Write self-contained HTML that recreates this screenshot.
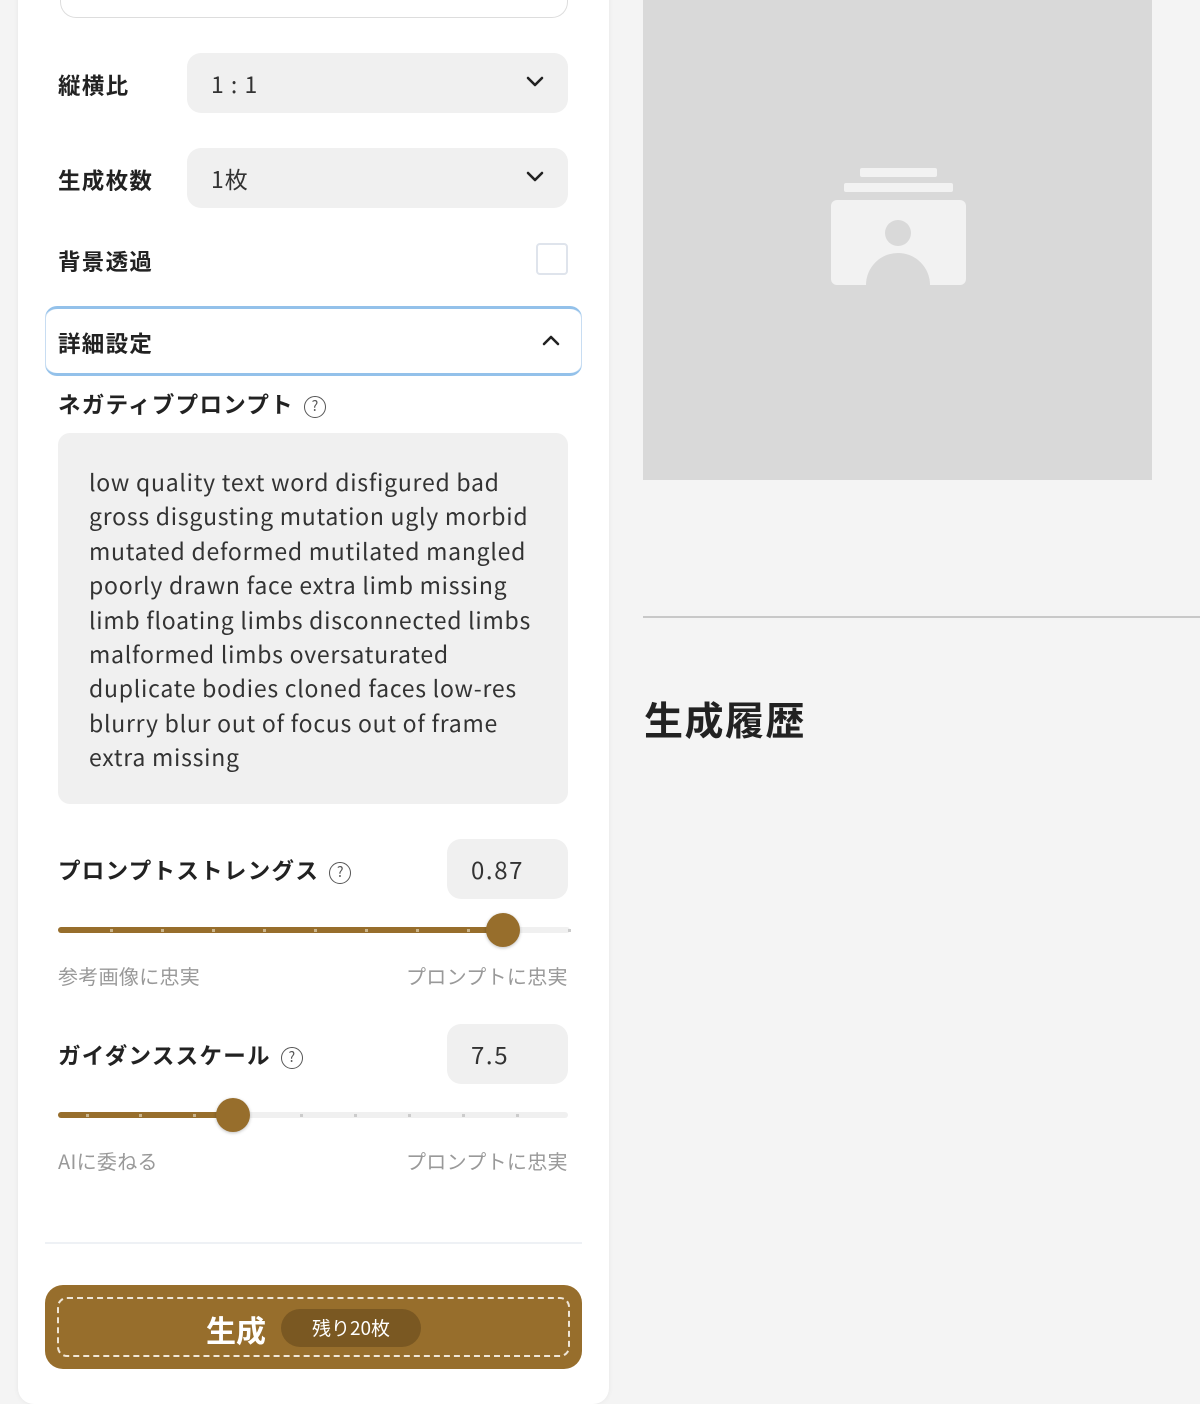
<!DOCTYPE html>
<html><head><meta charset="utf-8">
<style>
*{margin:0;padding:0;box-sizing:border-box}
body{width:1200px;height:1404px;background:#f4f4f4;position:relative;overflow:hidden;font-family:"Noto Sans CJK JP","Liberation Sans",sans-serif;color:#222}
.a{position:absolute}
.card{left:18px;top:-20px;width:591px;height:1424px;background:#fff;border-radius:16px;box-shadow:0 0 6px rgba(0,0,0,.06)}
.lbl{font-size:22.5px;font-weight:700;color:#222;line-height:1;letter-spacing:1.3px}
.sel{background:#f0f0f0;border-radius:14px;left:187px;width:381px;height:60px;font-size:23px;padding-left:24px;line-height:60px;color:#333;letter-spacing:1px}
.chev{position:absolute;right:24px;top:22px}
.q{display:inline-block;width:22px;height:22px;border:1.5px solid #555;border-radius:50%;font-size:14px;line-height:19px;text-align:center;font-weight:400;color:#555;vertical-align:2px;margin-left:10px;letter-spacing:0}
.val{left:447px;width:121px;height:60px;background:#f0f0f0;border-radius:14px;font-size:24px;line-height:60px;padding-left:24px;color:#333;letter-spacing:1.6px}
.track{height:6px;border-radius:3px;background:#f0f0f0}
.fill{height:6px;border-radius:3px;background:#976e2c;position:absolute;left:0;top:0}
.tick{position:absolute;top:2px;width:3px;height:3px;background:#c9b48c}
.tk2{background:#ccc}
.thumb{width:34px;height:34px;border-radius:50%;background:#976e2c;box-shadow:0 1px 3px rgba(0,0,0,.25)}
.sub{font-size:20px;color:#999;line-height:1;letter-spacing:0.3px}
</style></head><body>
<div class="a card"></div>
<div class="a" style="left:60px;top:-30px;width:508px;height:48px;border:1px solid #ddd;border-top:none;border-radius:0 0 16px 16px"></div>

<div class="a lbl" style="left:58px;top:74px">縦横比</div>
<div class="a sel" style="top:53px">1 : 1<svg class="chev" width="18" height="14" viewBox="0 0 18 14"><path d="M2 3l7 7 7-7" fill="none" stroke="#222" stroke-width="2.6" stroke-linecap="round" stroke-linejoin="round"/></svg></div>
<div class="a lbl" style="left:58px;top:169px">生成枚数</div>
<div class="a sel" style="top:148px">1枚<svg class="chev" width="18" height="14" viewBox="0 0 18 14"><path d="M2 3l7 7 7-7" fill="none" stroke="#222" stroke-width="2.6" stroke-linecap="round" stroke-linejoin="round"/></svg></div>
<div class="a lbl" style="left:58px;top:250px">背景透過</div>
<div class="a" style="left:536px;top:243px;width:32px;height:32px;border:2.5px solid #dfe4ec;border-radius:4px"></div>

<div class="a" style="left:45px;top:306px;width:537px;height:70px;border-top:3px solid #93c1ea;border-bottom:3px solid #93c1ea;border-radius:12px;box-shadow:inset 1px 0 0 #c8ddf2,inset -1px 0 0 #c8ddf2"></div>
<div class="a lbl" style="left:58px;top:332px">詳細設定</div>
<svg class="a" style="left:542px;top:334px" width="18" height="14" viewBox="0 0 18 14"><path d="M2 10l7-7 7 7" fill="none" stroke="#222" stroke-width="2.6" stroke-linecap="round" stroke-linejoin="round"/></svg>

<div class="a lbl" style="left:58px;top:393px">ネガティブプロンプト<span class="q">?</span></div>
<div class="a" style="left:58px;top:433px;width:510px;height:371px;background:#f0f0f0;border-radius:12px;padding:31px 0 0 31px;font-size:23px;line-height:34.4px;color:#333;white-space:nowrap;letter-spacing:0.75px">low quality text word disfigured bad<br>gross disgusting mutation ugly morbid<br>mutated deformed mutilated mangled<br>poorly drawn face extra limb missing<br>limb floating limbs disconnected limbs<br>malformed limbs oversaturated<br>duplicate bodies cloned faces low-res<br>blurry blur out of focus out of frame<br>extra missing</div>

<div class="a lbl" style="left:58px;top:859px">プロンプトストレングス<span class="q">?</span></div>
<div class="a val" style="top:839px">0.87</div>
<div class="a track" style="left:58px;top:927px;width:512px">
<div class="fill" style="width:445px"></div>
<div class="tick" style="left:52px"></div><div class="tick" style="left:103px"></div><div class="tick" style="left:154px"></div><div class="tick" style="left:205px"></div><div class="tick" style="left:256px"></div><div class="tick" style="left:307px"></div><div class="tick" style="left:358px"></div><div class="tick" style="left:409px"></div><div class="tick tk2" style="left:510px"></div>
</div>
<div class="a thumb" style="left:486px;top:913px"></div>
<div class="a sub" style="left:58px;top:966px">参考画像に忠実</div>
<div class="a sub" style="left:406px;top:966px">プロンプトに忠実</div>

<div class="a lbl" style="left:58px;top:1044px">ガイダンススケール<span class="q">?</span></div>
<div class="a val" style="top:1024px">7.5</div>
<div class="a track" style="left:58px;top:1112px;width:510px">
<div class="fill" style="width:175px"></div>
<div class="tick" style="left:28px"></div><div class="tick" style="left:81px"></div><div class="tick" style="left:135px"></div><div class="tick tk2" style="left:242px"></div><div class="tick tk2" style="left:296px"></div><div class="tick tk2" style="left:350px"></div><div class="tick tk2" style="left:404px"></div><div class="tick tk2" style="left:458px"></div>
</div>
<div class="a thumb" style="left:216px;top:1098px"></div>
<div class="a sub" style="left:58px;top:1151px">AIに委ねる</div>
<div class="a sub" style="left:406px;top:1151px">プロンプトに忠実</div>

<div class="a" style="left:45px;top:1242px;width:537px;height:2px;background:#eef1f5"></div>
<div class="a" style="left:45px;top:1285px;width:537px;height:84px;background:#976e2c;border-radius:18px"></div>
<div class="a" style="left:57px;top:1297px;width:513px;height:60px;border:2px dashed #f0e6d6;border-radius:10px"></div>
<div class="a" style="left:206px;top:1309px;font-size:30px;font-weight:700;color:#fff;line-height:40px">生成</div>
<div class="a" style="left:281px;top:1309px;width:140px;height:38px;border-radius:19px;background:#7a5822;color:#fff;font-size:19px;line-height:38px;text-align:center">残り20枚</div>

<div class="a" style="left:643px;top:0;width:509px;height:480px;background:#d9d9d9"></div>
<svg class="a" style="left:643px;top:0" width="509" height="480" viewBox="643 0 509 480">
<rect x="860" y="168" width="77" height="9" rx="2" fill="#f2f2f2"/>
<rect x="844" y="183" width="109" height="9" rx="2" fill="#f2f2f2"/>
<rect x="831" y="200" width="135" height="85" rx="6" fill="#f2f2f2"/>
<circle cx="898" cy="233" r="13" fill="#d9d9d9"/>
<path d="M866 285a32 32 0 0 1 64 0z" fill="#d9d9d9"/>
</svg>
<div class="a" style="left:643px;top:616px;width:557px;height:2px;background:#c8c8c8"></div>
<div class="a" style="left:644px;top:696px;font-size:39px;font-weight:700;color:#222;line-height:46px;letter-spacing:1.5px">生成履歴</div>
</body></html>
